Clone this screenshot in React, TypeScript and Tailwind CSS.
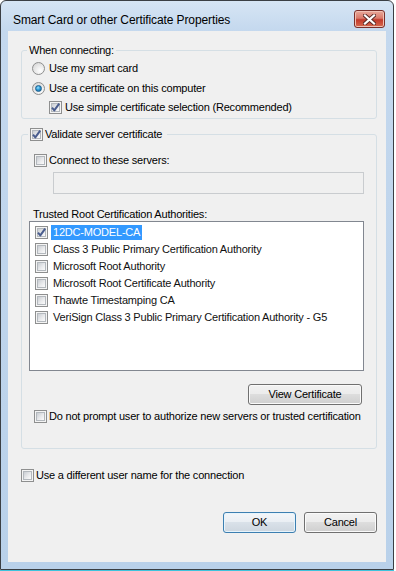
import React from "react";

const CheckBox = ({ checked = false }: { checked?: boolean }) => (
  <span className="relative flex h-[13px] w-[13px] shrink-0 border border-[#8e8f8f] bg-[#f4f4f4] p-[1px]">
    <span className="flex-1 border border-[#b3b8bd] bg-[linear-gradient(135deg,#c9cdd2_0%,#e9eaec_55%,#fbfbfb_100%)]" />
    {checked && (
      <svg className="absolute left-0 top-0" width="11" height="11" viewBox="0 0 11 11">
        <path d="M2 5.6 L4.3 8.4 L9.2 1.6" fill="none" stroke="#4a5d8e" strokeWidth="2" strokeLinejoin="round" />
      </svg>
    )}
  </span>
);

const Radio = ({ checked = false }: { checked?: boolean }) => (
  <span className="flex h-[13px] w-[13px] shrink-0 items-center justify-center rounded-full border border-[#8e8f8f] bg-[radial-gradient(circle_at_65%_70%,#ffffff_0%,#e6e6e6_55%,#cfcfcf_100%)]">
    {checked && (
      <span className="h-[7px] w-[7px] rounded-full border border-[#1d5f8e] bg-[radial-gradient(circle_at_40%_35%,#9ae3ff_0%,#2d9ad6_45%,#0b5a93_100%)]" />
    )}
  </span>
);

const WinButton = ({ label, primary = false, width }: { label: string; primary?: boolean; width: string }) => (
  <button
    className={
      primary
        ? `${width} h-[21px] rounded-[3px] border border-[#3c7fb1] bg-[linear-gradient(#f3f6f9_0%,#e9eef3_50%,#d9e1e9_50%,#cdd6df_100%)] text-[11px] tracking-[-0.2px] text-black shadow-[inset_0_0_0_1px_#e6f4fc]`
        : `${width} h-[21px] rounded-[3px] border border-[#707070] bg-[linear-gradient(#f2f2f2_0%,#ebebeb_50%,#dddddd_50%,#cfcfcf_100%)] text-[11px] tracking-[-0.2px] text-black shadow-[inset_0_0_0_1px_#fafafa]`
    }
  >
    {label}
  </button>
);

const authorities = [
  "12DC-MODEL-CA",
  "Class 3 Public Primary Certification Authority",
  "Microsoft Root Authority",
  "Microsoft Root Certificate Authority",
  "Thawte Timestamping CA",
  "VeriSign Class 3 Public Primary Certification Authority - G5",
];

const App = () => {
  return (
    <div className="h-[571px] w-[396px] bg-white font-['Liberation_Sans',Arial,sans-serif] text-[11px] tracking-[-0.2px] text-black">
      <div className="flex h-[570px] w-[394px] flex-col rounded-t-[6px] border border-[#3b3f44] bg-[linear-gradient(#d6e5f4_0px,#c4d8ee_30px,#b9d1ea_100%)]">
        {/* title bar */}
        <div className="flex h-[30px] shrink-0 items-start justify-between">
          <span className="pl-[12px] pt-[11px] text-[12px] leading-[16px] tracking-[-0.1px] text-black">
            Smart Card or other Certificate Properties
          </span>
          <span className="mr-[8px] mt-[9px] flex h-[18px] w-[31px] items-center justify-center rounded-[3px] border border-[#7a2f2a] bg-[linear-gradient(#e9a99b_0%,#d9796a_45%,#c2392b_55%,#d66a4f_100%)] shadow-[inset_0_0_0_1px_#f0c0b4]">
            <svg width="13" height="11" viewBox="0 0 13 11">
              <path d="M2 1.5 L11 9.5 M11 1.5 L2 9.5" stroke="#5a2a26" strokeWidth="4" strokeLinecap="square" />
              <path d="M2 1.5 L11 9.5 M11 1.5 L2 9.5" stroke="#ffffff" strokeWidth="2.2" strokeLinecap="square" />
            </svg>
          </span>
        </div>

        {/* client area */}
        <div className="mx-[7px] mb-[7px] flex flex-1 flex-col bg-[#f0f0f0]">
          {/* When connecting */}
          <fieldset className="ml-[13px] mr-[9px] mt-[13px] rounded-[3px] border border-[#d5dfe5]">
            <legend className="ml-[5px] px-[2px] leading-[13px]">When connecting:</legend>
            <div className="flex flex-col pb-[2px] pt-[2px]">
              <div className="flex h-[19px] items-center gap-[4px] pl-[10px]">
                <Radio />
                <span>Use my smart card</span>
              </div>
              <div className="flex h-[20px] items-center gap-[4px] pl-[10px]">
                <Radio checked />
                <span>Use a certificate on this computer</span>
              </div>
              <div className="flex h-[18px] items-center gap-[3px] pl-[27px]">
                <CheckBox checked />
                <span>Use simple certificate selection (Recommended)</span>
              </div>
            </div>
          </fieldset>

          {/* Validate server certificate */}
          <fieldset className="ml-[13px] mr-[9px] mt-[8px] rounded-[3px] border border-[#d5dfe5]">
            <legend className="ml-[6px] flex h-[15px] items-center gap-[2px] pl-[2px] pr-[5px]">
              <CheckBox checked />
              <span>Validate server certificate</span>
            </legend>
            <div className="flex flex-col pb-[24px]">
              <div className="mt-[10px] flex h-[17px] items-center gap-[2px] pl-[12px]">
                <CheckBox />
                <span>Connect to these servers:</span>
              </div>
              <div className="ml-[31px] mt-[3px] h-[22px] w-[311px] border border-[#c9cccf] bg-[#f0f0f0]" />
              <div className="mt-[14px] h-[13px] pl-[11px] leading-[13px]">Trusted Root Certification Authorities:</div>
              <div className="ml-[7px] h-[150px] w-[335px] border border-[#828790] bg-white pt-[2px]">
                {authorities.map((name, i) => (
                  <div key={name} className="flex h-[17px] items-center gap-[3px] pl-[5px]">
                    <CheckBox checked={i === 0} />
                    <span
                      className={
                        i === 0
                          ? "flex h-[15px] items-center bg-[#3399ff] px-[2px] text-white"
                          : "flex h-[15px] items-center px-[2px] text-[#111]"
                      }
                    >
                      {name}
                    </span>
                  </div>
                ))}
              </div>
              <div className="mr-[14px] mt-[13px] flex justify-end">
                <WinButton label="View Certificate" width="w-[114px]" />
              </div>
              <div className="mt-[4px] flex h-[15px] items-center gap-[2px] pl-[12px]">
                <CheckBox />
                <span className="whitespace-nowrap">
                  Do not prompt user to authorize new servers or trusted certification
                </span>
              </div>
            </div>
          </fieldset>

          <div className="ml-[13px] mt-[19px] flex h-[15px] items-center gap-[2px]">
            <CheckBox />
            <span>Use a different user name for the connection</span>
          </div>

          <div className="mr-[9px] mt-[29px] flex justify-end gap-[8px]">
            <WinButton label="OK" primary width="w-[73px]" />
            <WinButton label="Cancel" width="w-[73px]" />
          </div>
        </div>
      </div>
      <div className="h-[1px] w-[394px] bg-[#3fc3dc]" />
    </div>
  );
};

export default App;
